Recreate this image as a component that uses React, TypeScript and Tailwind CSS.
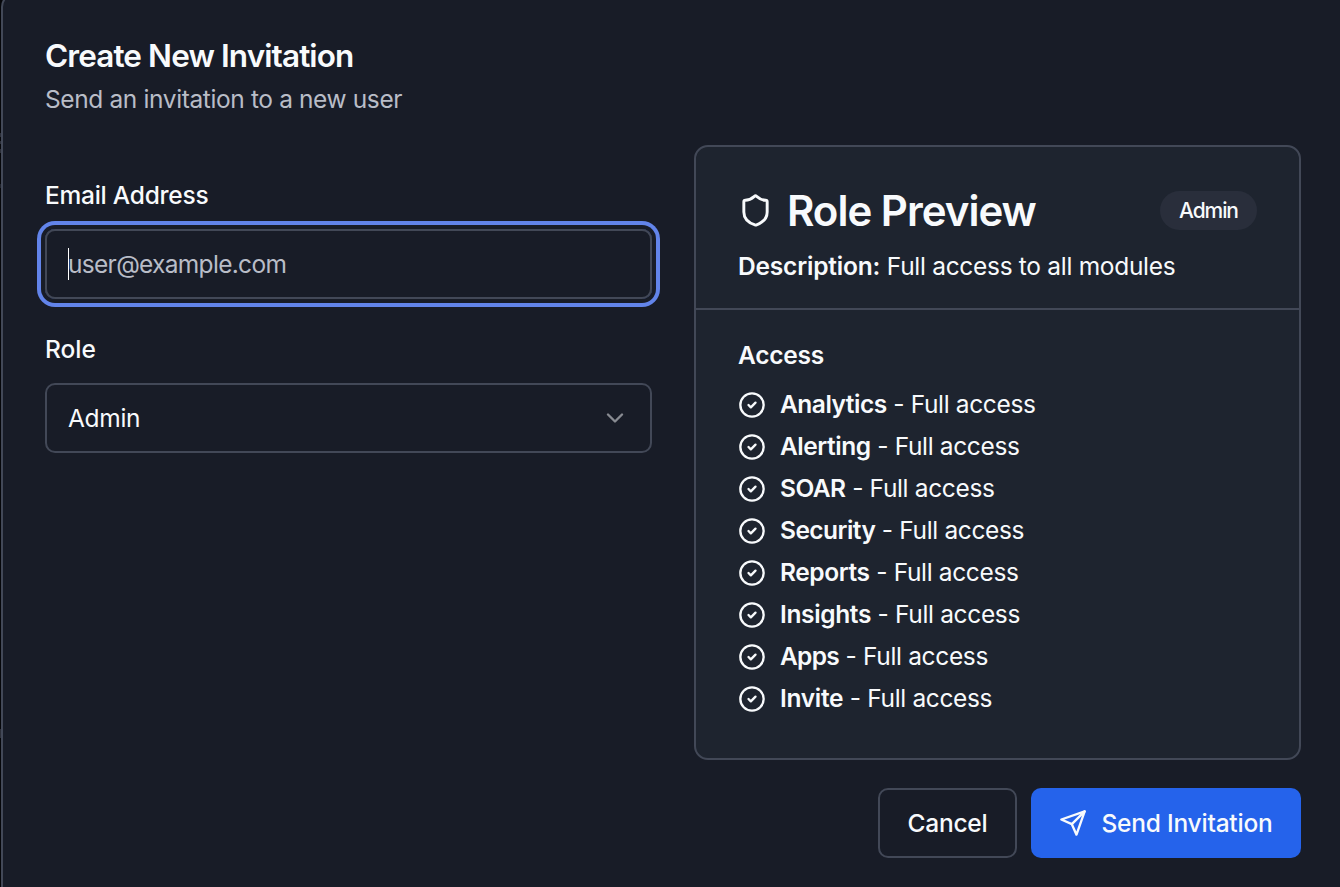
import React from 'react';
import { ChevronDown, CircleCheck, Shield } from 'lucide-react';

const modules = [
  { name: 'Analytics', spacing: 'tracking-[-0.5px]' },
  { name: 'Alerting', spacing: 'tracking-[-0.45px]' },
  { name: 'SOAR', spacing: 'tracking-[-0.5px]' },
  { name: 'Security', spacing: 'tracking-[-0.55px]' },
  { name: 'Reports', spacing: 'tracking-[-0.4px]' },
  { name: 'Insights', spacing: 'tracking-[-0.35px]' },
  { name: 'Apps', spacing: 'tracking-[-0.7px]' },
  { name: 'Invite', spacing: 'tracking-[-0.3px]' },
];

function SendIcon() {
  return (
    <svg
      className="size-7 shrink-0"
      viewBox="0 0 24 24"
      fill="none"
      stroke="currentColor"
      strokeWidth="2"
      strokeLinecap="round"
      strokeLinejoin="round"
    >
      <path d="m22 2-7 20-4-9-9-4Z" />
      <path d="M22 2 11 13" />
    </svg>
  );
}

function InviteForm() {
  return (
    <div className="flex flex-col pt-[36px]">
      <label className="text-[24.5px] leading-[28px] font-medium tracking-[-0.25px]">Email Address</label>
      <div className="mt-[20px] flex h-[70px] items-center rounded-[10px] border-2 border-[#424857] px-[21px] ring-4 ring-[#6284ea] ring-offset-4 ring-offset-[#181c27]">
        <span className="h-8 w-px bg-white"></span>
        <span className="-ml-px text-[24.5px] leading-[35px] tracking-[-0.7px] text-[#b9bdc7]">user@example.com</span>
      </div>
      <label className="mt-[36px] text-[24.5px] leading-[28px] font-medium">Role</label>
      <button className="mt-[20px] flex h-[70px] items-center justify-between rounded-[10px] border-2 border-[#424857] px-[21px]">
        <span className="text-[24.5px] leading-[35px] tracking-[-0.3px]">Admin</span>
        <ChevronDown className="size-7 opacity-50" />
      </button>
    </div>
  );
}

function RolePreview() {
  return (
    <div className="h-[615px] rounded-[14px] border-2 border-[#424857] bg-[#1e242f]">
      <div className="flex h-[163px] flex-col border-b-2 border-[#424857] px-[42px] pt-[42px]">
        <div className="flex h-[43px] items-center justify-between">
          <div className="flex items-center gap-[14px]">
            <Shield className="size-[35px]" />
            <h2 className="text-[42px] leading-[42px] font-semibold tracking-[-1px]">Role Preview</h2>
          </div>
          <span className="flex h-[39px] w-[97px] items-center justify-center rounded-full bg-[#292e3b] text-[21px] leading-7 font-medium tracking-[-1.1px]">
            Admin
          </span>
        </div>
        <p className="mt-[17px] text-[24.5px] leading-[35px] tracking-[-0.3px] whitespace-nowrap">
          <strong className="font-semibold tracking-[-0.18px]">Description:</strong> Full access to all modules
        </p>
      </div>
      <div className="px-[42px] pt-[28px]">
        <h3 className="text-[24.5px] leading-[35px] font-semibold tracking-[-0.25px]">Access</h3>
        <ul className="mt-[14px] flex flex-col gap-[7px]">
          {modules.map((item) => (
            <li key={item.name} className="flex items-center gap-[14px] text-[24.5px] leading-[35px]">
              <CircleCheck className="size-7" />
              <span className="tracking-[-0.35px]">
                <strong className={`font-semibold ${item.spacing}`}>{item.name}</strong> - Full access
              </span>
            </li>
          ))}
        </ul>
      </div>
    </div>
  );
}

export default function App() {
  return (
    <div className="relative h-[887px] w-[1340px] overflow-hidden bg-[#050609] pl-px font-['Inter',sans-serif] text-[#f8fafc]">
      {/* dimmed page content behind the dialog */}
      <span className="absolute top-[133px] left-0 h-[4px] w-px bg-[#2b2e38]"></span>
      <span className="absolute top-[141px] left-0 h-[3px] w-px bg-[#2b2e38]"></span>
      <span className="absolute top-[149px] left-0 h-[4px] w-px bg-[#2b2e38]"></span>
      <span className="absolute top-[184px] left-0 h-[4px] w-px bg-[#1f222b]"></span>
      <span className="absolute top-[729px] left-0 h-[9px] w-px bg-[#2b2e38]"></span>

      <div className="-mt-[7px] h-[910px] w-[1344px] rounded-[14px] border-2 border-[#424857] bg-[#181c27] px-[42px] pt-[45px]">
        <header className="h-[105px]">
          <h1 className="text-[31.5px] leading-[32px] font-semibold tracking-[-0.9px]">Create New Invitation</h1>
          <p className="mt-[10px] text-[24.5px] leading-[35px] tracking-[-0.38px] text-[#b9bdc7]">
            Send an invitation to a new user
          </p>
        </header>
        <div className="grid w-[1256px] grid-cols-2 gap-[42px]">
          <InviteForm />
          <RolePreview />
        </div>
        <footer className="mt-7 flex w-[1256px] justify-end gap-[14px]">
          <button className="h-[70px] w-[139px] rounded-[10px] border-2 border-[#424857] text-[24.5px] leading-[35px] font-medium tracking-[-0.25px]">
            Cancel
          </button>
          <button className="flex h-[70px] w-[270px] items-center justify-center gap-[14px] rounded-[10px] bg-[#2563eb] text-[24.5px] leading-[35px] font-medium tracking-[-0.22px] whitespace-nowrap">
            <SendIcon />
            Send Invitation
          </button>
        </footer>
      </div>
    </div>
  );
}
